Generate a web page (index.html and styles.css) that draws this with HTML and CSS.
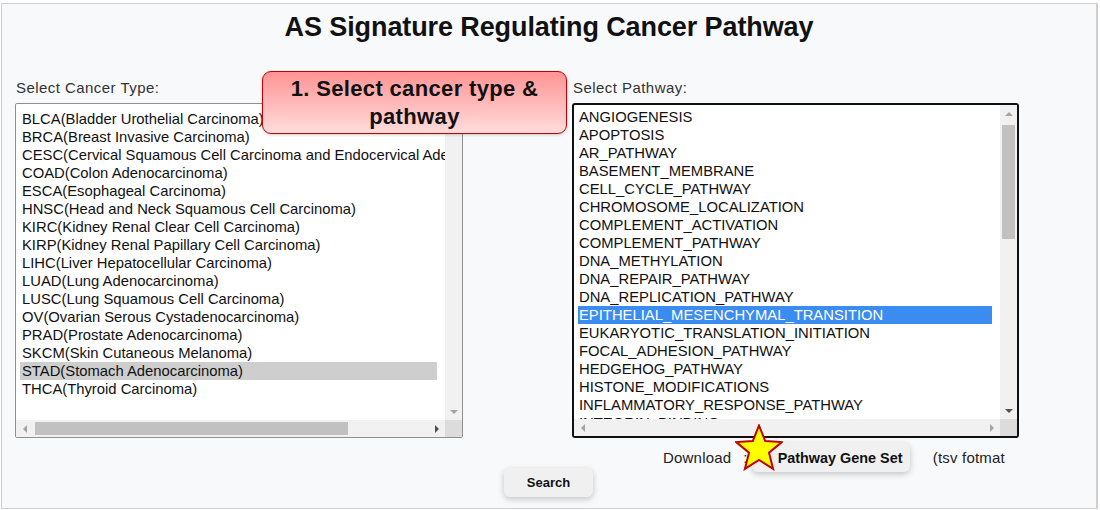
FILE: index.html
```html
<!DOCTYPE html>
<html>
<head>
<meta charset="utf-8">
<link rel="stylesheet" href="styles.css">
</head>
<body>
<div class="frame">
  <h1 class="title">AS Signature Regulating Cancer Pathway</h1>
  <div class="columns">
    <div class="col col-left">
      <div class="label">Select Cancer Type:</div>
      <div class="listbox lb-left">
        <div class="lb-content">
          <div class="opt">BLCA(Bladder Urothelial Carcinoma)</div>
          <div class="opt">BRCA(Breast Invasive Carcinoma)</div>
          <div class="opt">CESC(Cervical Squamous Cell Carcinoma and Endocervical Adenocarcinoma)</div>
          <div class="opt">COAD(Colon Adenocarcinoma)</div>
          <div class="opt">ESCA(Esophageal Carcinoma)</div>
          <div class="opt">HNSC(Head and Neck Squamous Cell Carcinoma)</div>
          <div class="opt">KIRC(Kidney Renal Clear Cell Carcinoma)</div>
          <div class="opt">KIRP(Kidney Renal Papillary Cell Carcinoma)</div>
          <div class="opt">LIHC(Liver Hepatocellular Carcinoma)</div>
          <div class="opt">LUAD(Lung Adenocarcinoma)</div>
          <div class="opt">LUSC(Lung Squamous Cell Carcinoma)</div>
          <div class="opt">OV(Ovarian Serous Cystadenocarcinoma)</div>
          <div class="opt">PRAD(Prostate Adenocarcinoma)</div>
          <div class="opt">SKCM(Skin Cutaneous Melanoma)</div>
          <div class="opt sel-gray">STAD(Stomach Adenocarcinoma)</div>
          <div class="opt">THCA(Thyroid Carcinoma)</div>
        </div>
        <div class="vbar">
          <span class="arr arr-up dis"></span>
          <span class="vtrack"></span>
          <span class="arr arr-down dis"></span>
        </div>
        <div class="hbar">
          <span class="arr arr-left dis"></span>
          <span class="htrack"><span class="hthumb"></span></span>
          <span class="arr arr-right"></span>
        </div>
        <div class="corner"></div>
      </div>
    </div>
    <div class="col col-right">
      <div class="label">Select Pathway:</div>
      <div class="listbox lb-right">
        <div class="lb-content">
          <div class="opt">ANGIOGENESIS</div>
          <div class="opt">APOPTOSIS</div>
          <div class="opt">AR_PATHWAY</div>
          <div class="opt">BASEMENT_MEMBRANE</div>
          <div class="opt">CELL_CYCLE_PATHWAY</div>
          <div class="opt">CHROMOSOME_LOCALIZATION</div>
          <div class="opt">COMPLEMENT_ACTIVATION</div>
          <div class="opt">COMPLEMENT_PATHWAY</div>
          <div class="opt">DNA_METHYLATION</div>
          <div class="opt">DNA_REPAIR_PATHWAY</div>
          <div class="opt">DNA_REPLICATION_PATHWAY</div>
          <div class="opt sel-blue">EPITHELIAL_MESENCHYMAL_TRANSITION</div>
          <div class="opt">EUKARYOTIC_TRANSLATION_INITIATION</div>
          <div class="opt">FOCAL_ADHESION_PATHWAY</div>
          <div class="opt">HEDGEHOG_PATHWAY</div>
          <div class="opt">HISTONE_MODIFICATIONS</div>
          <div class="opt">INFLAMMATORY_RESPONSE_PATHWAY</div>
          <div class="opt">INTEGRIN_BINDING</div>
          <div class="opt">KRAS_SIGNALING</div>
        </div>
        <div class="vbar">
          <span class="arr arr-up dis"></span>
          <span class="vtrack"><span class="vthumb"></span></span>
          <span class="arr arr-down"></span>
        </div>
        <div class="hbar">
          <span class="arr arr-left dis"></span>
          <span class="htrack"></span>
          <span class="arr arr-right dis"></span>
        </div>
        <div class="corner"></div>
      </div>
      <div class="download">
        <span class="dl-label">Download</span>
        <span class="dl-colon">:</span>
        <button class="btn btn-gene">Pathway Gene Set</button>
        <span class="dl-fmt">(tsv fotmat</span>
      </div>
    </div>
  </div>
  <div class="search-row">
    <button class="btn btn-search">Search</button>
  </div>

  <div class="callout">1. Select cancer type &amp;<br>pathway</div>
  <svg class="star" width="48" height="47" viewBox="0 0 48 47">
    <polygon points="24,1.5 30.2,17 46.8,18.1 34,28.7 38.1,44.9 24,36 9.9,44.9 14,28.7 1.2,18.1 17.8,17" fill="#ffff00" stroke="#c00000" stroke-width="2" stroke-linejoin="miter"/>
  </svg>
</div>
</body>
</html>
```
FILE: styles.css
```css
html, body {
  margin: 0;
  padding: 0;
  background: #ffffff;
}
body {
  font-family: "Liberation Sans", Arial, sans-serif;
  color: #000;
}
.frame {
  position: relative;
  margin: 3px 0 0 1px;
  width: 1094px;
  height: 504px;
  border: 1px solid #cfcfcf;
  border-right: 2px solid #cfcfcf;
  background: #f8f9fb;
  overflow: hidden;
}
.title {
  margin: 0;
  padding-top: 7px;
  font-size: 27px;
  line-height: 32px;
  font-weight: bold;
  text-align: center;
  color: #111;
  letter-spacing: -0.1px;
}
.columns {
  display: grid;
  grid-template-columns: 448px 447px;
  column-gap: 109px;
  padding-left: 13px;
  margin-top: 37px;
}
.label {
  font-size: 15px;
  line-height: 16px;
  letter-spacing: 0.45px;
  color: #333;
  padding-left: 1px;
  margin-bottom: 7px;
}
.listbox {
  position: relative;
  height: 335px;
  box-sizing: border-box;
  background: #fff;
  overflow: hidden;
}
.lb-left {
  border: 1px solid #8f8f8f;
  border-radius: 2px;
}
.lb-right {
  margin-top: 1px;
  border: 2px solid #101010;
  border-radius: 3px;
}
.lb-content {
  position: absolute;
  left: 0;
  top: 0;
  right: 17px;
  bottom: 17px;
  overflow: hidden;
  padding: 5px 0 0 4px;
}
.lb-left .lb-content {
  padding-top: 6px;
}
.lb-right .lb-content {
  padding-top: 3px;
}
.opt {
  font-size: 14.8px;
  line-height: 18px;
  height: 18px;
  padding-left: 1px;
  white-space: nowrap;
  color: #111;
}
.lb-left .opt { width: 415px; padding-left: 2px; }
.lb-right .opt { width: 413px; }
.sel-gray { background: #cecece; }
.sel-blue { background: #3b8cf0; color: #fff; }

.vbar {
  position: absolute;
  top: 0;
  right: 0;
  bottom: 17px;
  width: 17px;
  background: #f1f1f1;
  display: flex;
  flex-direction: column;
}
.hbar {
  position: absolute;
  left: 0;
  right: 17px;
  bottom: 0;
  height: 17px;
  background: #f1f1f1;
  display: flex;
  align-items: center;
}
.corner {
  position: absolute;
  right: 0;
  bottom: 0;
  width: 17px;
  height: 17px;
  background: #dcdcdc;
}
.arr {
  flex: 0 0 17px;
  height: 17px;
  position: relative;
}
.arr::after {
  content: "";
  position: absolute;
  width: 0;
  height: 0;
  left: 50%;
  top: 50%;
}
.arr-up::after {
  border-left: 4px solid transparent;
  border-right: 4px solid transparent;
  border-bottom: 4px solid #505050;
  transform: translate(-50%, -50%);
}
.arr-down::after {
  border-left: 4px solid transparent;
  border-right: 4px solid transparent;
  border-top: 4px solid #505050;
  transform: translate(-50%, -50%);
}
.arr-left::after {
  border-top: 4px solid transparent;
  border-bottom: 4px solid transparent;
  border-right: 4px solid #505050;
  transform: translate(-50%, -50%);
}
.arr-right::after {
  border-top: 4px solid transparent;
  border-bottom: 4px solid transparent;
  border-left: 4px solid #505050;
  transform: translate(-50%, -50%);
}
.arr.dis::after {
  border-top-color: transparent;
  border-bottom-color: transparent;
  border-left-color: transparent;
  border-right-color: transparent;
}
.arr-up.dis::after { border-bottom-color: #a3a3a3; }
.arr-down.dis::after { border-top-color: #a3a3a3; }
.arr-left.dis::after { border-right-color: #a3a3a3; }
.arr-right.dis::after { border-left-color: #a3a3a3; }

.vtrack {
  flex: 1;
  position: relative;
  padding: 0 2px;
}
.vthumb {
  display: block;
  margin-top: 3px;
  height: 114px;
  background: #c1c1c1;
}
.htrack {
  flex: 1;
  height: 17px;
  display: flex;
  align-items: center;
}
.hthumb {
  display: block;
  margin-left: 2px;
  width: 313px;
  height: 13px;
  background: #c1c1c1;
}

.download {
  display: flex;
  align-items: center;
  height: 29px;
  margin-top: 5px;
  padding-left: 91px;
  font-size: 15px;
  letter-spacing: 0.2px;
  color: #222;
  white-space: nowrap;
}
.dl-colon {
  margin-left: 12px;
}
.btn {
  font-family: "Liberation Sans", Arial, sans-serif;
  font-weight: bold;
  font-size: 13px;
  color: #111;
  background: #f0f0f0;
  border: none;
  border-radius: 6px;
  box-shadow: 0 2px 6px rgba(0, 0, 0, 0.22);
  height: 29px;
  padding: 0;
}
.btn-gene {
  width: 158px;
  margin-left: 4px;
  font-size: 14.4px;
  text-align: left;
  padding-left: 26px;
}
.dl-fmt {
  margin-left: 23px;
}
.search-row {
  display: flex;
  justify-content: center;
  margin-top: -4px;
  padding-right: 1px;
}
.btn-search {
  width: 89px;
}

.callout {
  position: absolute;
  left: 260px;
  top: 67px;
  width: 303px;
  height: 58px;
  border: 1px solid #c00000;
  border-radius: 9px;
  background: linear-gradient(#ff9494, #ffdcdc);
  box-shadow: 0 1px 3px rgba(0, 0, 0, 0.2);
  font-size: 22px;
  letter-spacing: 0.35px;
  font-weight: bold;
  line-height: 28px;
  text-align: center;
  color: #111;
  padding-top: 3px;
  box-sizing: content-box;
}
.star {
  position: absolute;
  left: 733px;
  top: 420px;
}
```
